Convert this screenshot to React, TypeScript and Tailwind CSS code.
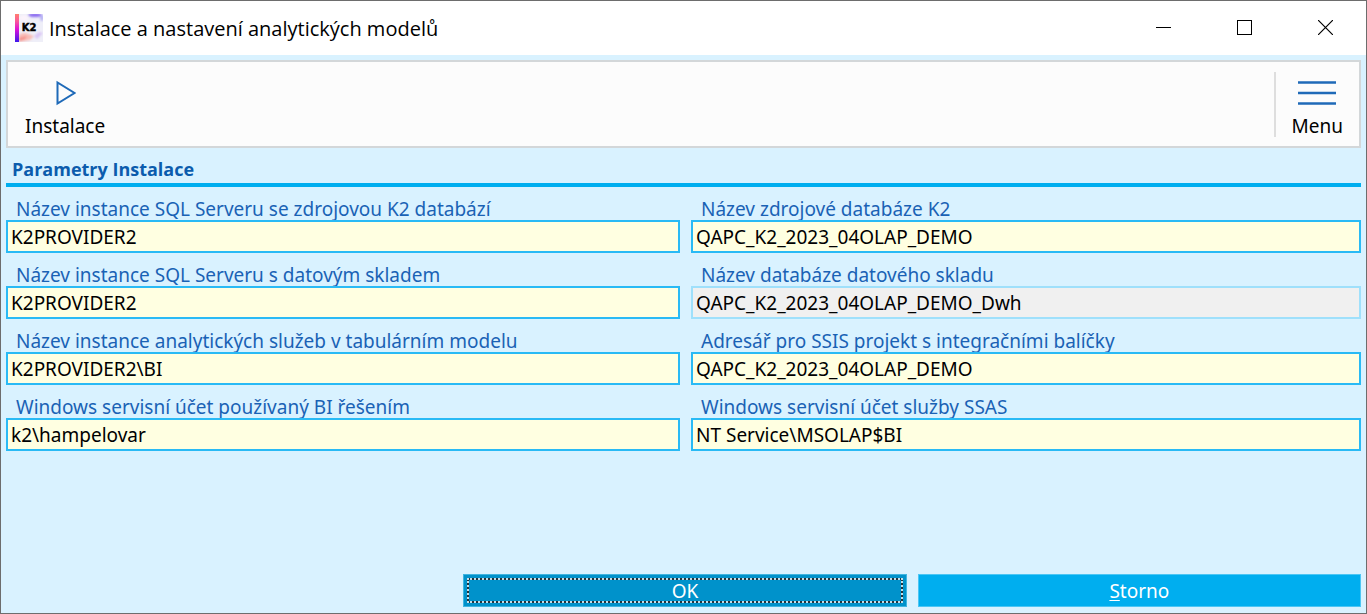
import { useState } from "react";

type Field = {
  id: string;
  label: string;
  value: string;
  readOnly?: boolean;
};

const fields: Field[] = [
  { id: "sourceInstance", label: "Název instance SQL Serveru se zdrojovou K2 databází", value: "K2PROVIDER2" },
  { id: "sourceDb", label: "Název zdrojové databáze K2", value: "QAPC_K2_2023_04OLAP_DEMO" },
  { id: "dwhInstance", label: "Název instance SQL Serveru s datovým skladem", value: "K2PROVIDER2" },
  { id: "dwhDb", label: "Název databáze datového skladu", value: "QAPC_K2_2023_04OLAP_DEMO_Dwh", readOnly: true },
  { id: "ssasInstance", label: "Název instance analytických služeb v tabulárním modelu", value: "K2PROVIDER2\\BI" },
  { id: "ssisFolder", label: "Adresář pro SSIS projekt s integračními balíčky", value: "QAPC_K2_2023_04OLAP_DEMO" },
  { id: "biAccount", label: "Windows servisní účet používaný BI řešením", value: "k2\\hampelovar" },
  { id: "ssasAccount", label: "Windows servisní účet služby SSAS", value: "NT Service\\MSOLAP$BI" },
];

function AppIcon() {
  return (
    <svg width="28" height="28" viewBox="0 0 28 28" aria-hidden="true">
      <defs>
        <linearGradient id="bar" x1="0" y1="0" x2="0" y2="1">
          <stop offset="0" stopColor="#ff7f6e" />
          <stop offset="0.25" stopColor="#fb5a98" />
          <stop offset="0.55" stopColor="#dc12d8" />
          <stop offset="1" stopColor="#3d18ee" />
        </linearGradient>
        <filter id="soft" x="-30%" y="-30%" width="160%" height="160%">
          <feGaussianBlur stdDeviation="1.1" />
        </filter>
        <clipPath id="tile">
          <rect width="28" height="28" />
        </clipPath>
      </defs>
      <g clipPath="url(#tile)">
        <rect width="28" height="28" fill="#efeff8" />
        <g filter="url(#soft)">
          <ellipse cx="20" cy="1" rx="7" ry="2" fill="#8b6cf0" />
          <ellipse cx="27" cy="4" rx="2" ry="3" fill="#b9b5f5" />
          <ellipse cx="9" cy="4" rx="5" ry="3" fill="#fbf3fb" />
          <path d="M4 21 C9 17 13 20 19 22 L15 26 L4 28 Z" fill="#f9bcb6" />
          <path d="M4 24 L12 22 L10 25 L4 27 Z" fill="#f38d87" />
          <path d="M19 22 L24 18 L28 19 L22 25 Z" fill="#d9c4f5" />
        </g>
        <rect width="4" height="28" fill="url(#bar)" />
        <text
          x="14"
          y="17"
          textAnchor="middle"
          className="fill-black stroke-black font-['DejaVu_Sans',sans-serif] text-[10px] font-bold"
          strokeWidth="0.4"
        >
          K2
        </text>
      </g>
    </svg>
  );
}

function TitleBar() {
  return (
    <header className="flex h-[54px] items-center bg-white pl-3.5">
      <AppIcon />
      <h1 className="ml-1.5 flex-1 truncate pt-0.5 font-['Open_Sans',sans-serif] text-[20px] text-black">
        Instalace a nastavení analytických modelů
      </h1>
      <div className="flex h-full pb-0.5 text-black">
        <button type="button" aria-label="Minimalizovat" className="flex w-[81px] items-center justify-center hover:bg-gray-200">
          <svg width="15" height="15" shapeRendering="crispEdges">
            <path d="M0 7.5H15" stroke="currentColor" />
          </svg>
        </button>
        <button type="button" aria-label="Maximalizovat" className="flex w-[81px] items-center justify-center hover:bg-gray-200">
          <svg width="15" height="15" shapeRendering="crispEdges">
            <rect x="0.5" y="0.5" width="14" height="14" fill="none" stroke="currentColor" />
          </svg>
        </button>
        <button type="button" aria-label="Zavřít" className="flex w-[81px] items-center justify-center hover:bg-red-500">
          <svg width="15" height="15">
            <path d="M0 0L15 15M15 0L0 15" stroke="currentColor" strokeWidth="1.2" />
          </svg>
        </button>
      </div>
    </header>
  );
}

function Toolbar() {
  return (
    <div className="flex items-stretch justify-between border-2 border-[#d3d7d9] bg-[#fcfcfc] pt-2.5 pb-[9px]">
      <button type="button" className="flex flex-col items-center gap-2.5 px-[17px] pt-2 text-black">
        <svg width="22" height="26" viewBox="0 0 22 26" fill="none">
          <path d="M3.5 2.5V23.5L20.5 13Z" stroke="#1f6ab8" strokeWidth="2" />
        </svg>
        <span className="leading-[21px]">Instalace</span>
      </button>
      <button type="button" className="flex flex-col items-center gap-2.5 border-l-2 border-[#dedede] px-4 pt-2 text-black">
        <svg width="38" height="26" viewBox="0 0 38 26">
          <path d="M0 2.5H38M0 13H38M0 23.5H38" stroke="#1f6ab8" strokeWidth="2.4" />
        </svg>
        <span className="leading-[21px]">Menu</span>
      </button>
    </div>
  );
}

export default function App() {
  const [values, setValues] = useState<Record<string, string>>(
    Object.fromEntries(fields.map((f) => [f.id, f.value]))
  );

  return (
    <div className="flex min-h-screen flex-col border border-[#6d6d6d] bg-[#d9f2ff] font-['Noto_Sans','Open_Sans',sans-serif] text-[19px]">
      <TitleBar />
      <form className="flex flex-1 flex-col px-[5px] pt-[5px] pb-1.5" onSubmit={(e) => e.preventDefault()}>
        <Toolbar />
        <h2 className="mt-[7px] border-b-4 border-[#00aeef] px-1.5 font-['Open_Sans',sans-serif] text-[18px] leading-7 font-bold text-[#0b5cad]">
          Parametry Instalace
        </h2>

        <div className="grid grid-cols-[674fr_670fr] gap-x-[11px]">
          {fields.map((f) => (
            <div key={f.id} className="flex flex-col">
              <label htmlFor={f.id} className="px-2.5 pt-[11px] leading-[22px] whitespace-nowrap text-[#1a62b5]">
                {f.label}
              </label>
              <input
                id={f.id}
                type="text"
                value={values[f.id]}
                readOnly={f.readOnly}
                onChange={(e) => setValues({ ...values, [f.id]: e.target.value })}
                className={
                  f.readOnly
                    ? "h-[33px] border-2 border-[#9fe0fb] bg-[#f0f0f0] px-[3px] text-black outline-none"
                    : "h-[33px] border-2 border-[#29baf5] bg-[#ffffe1] px-[3px] text-black outline-none"
                }
              />
            </div>
          ))}
        </div>

        <div className="mt-auto grid grid-cols-3 gap-[11px] pl-[3px] text-white">
          <button type="submit" className="col-start-2 h-[33px] border border-[#3fb5e0] bg-[#0092cb] p-[3px]">
            <span className="block h-full border-2 border-dotted border-[#c4dfea] bg-[#24333b]">
              <span className="flex h-full items-center justify-center bg-[#0092cb] pt-0.5">OK</span>
            </span>
          </button>
          <button type="button" className="h-[33px] border border-[#4cc6f4] bg-[#00aeef] pt-0.5">
            <span className="underline underline-offset-2">S</span>torno
          </button>
        </div>
      </form>
    </div>
  );
}
